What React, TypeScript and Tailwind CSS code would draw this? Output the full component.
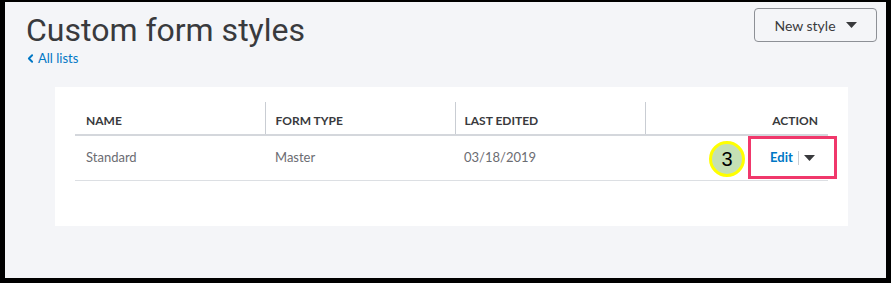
import { ChevronLeft } from 'lucide-react'

function Caret({ className }: { className?: string }) {
  return (
    <svg width="11" height="6" viewBox="0 0 11 6" className={className}>
      <path d="M0 0h11L5.5 6z" fill="currentColor" />
    </svg>
  )
}

const rows = [{ name: 'Standard', type: 'Master', edited: '03/18/2019' }]

export default function App() {
  return (
    <div className="w-[891px] h-[283px] border-l-[5px] border-r-[5px] border-t-[2px] border-b-[5px] border-black bg-[#f4f5f8] font-['Lato',sans-serif] overflow-hidden">
      <div className="flex justify-between pl-[21px] pr-[9px]">
        <div className="pt-[10px]">
          <h1 className="font-['Roboto',sans-serif] text-[32px] leading-[36px] text-[#393a3d]">Custom form styles</h1>
          <a className="mt-[2px] flex items-center text-[13px] leading-[16px] text-[#0077c5]">
            <ChevronLeft size={13} strokeWidth={3.5} className="-ml-[2px] mr-[1px]" />
            All lists
          </a>
        </div>
        <button className="mt-[6px] h-[34px] w-[123px] flex items-center justify-center gap-[10px] rounded-[4px] border border-[#8d9096] bg-[#f4f5f8] text-[14px] text-[#393a3d]">
          New style
          <Caret className="text-[#393a3d]" />
        </button>
      </div>
      <div className="ml-[50px] mt-[21px] w-[793px] h-[139px] bg-white px-[20px] pt-[15px]">
        <table className="w-full border-collapse">
          <thead>
            <tr className="border-b-2 border-[#d4d7dc] text-[12px] font-bold text-[#393a3d] uppercase">
              <th className="w-[190px] h-[33px] pl-[11px] pb-[4px] align-bottom text-left font-bold border-r border-[#c9cdd3]">Name</th>
              <th className="w-[190px] pl-[10px] pb-[4px] align-bottom text-left font-bold border-r border-[#c9cdd3]">Form type</th>
              <th className="w-[190px] pl-[9px] pb-[4px] align-bottom text-left font-bold border-r border-[#c9cdd3]">Last edited</th>
              <th className="pr-[10px] pb-[4px] align-bottom text-right font-bold">Action</th>
            </tr>
          </thead>
          <tbody>
            {rows.map(r => (
              <tr key={r.name} className="border-b border-[#dcdfe3] text-[13px] text-[#6b6c72]">
                <td className="h-[45px] pl-[11px]">{r.name}</td>
                <td className="pl-[10px]">{r.type}</td>
                <td className="pl-[9px]">{r.edited}</td>
                <td className="relative">
                  <div className="absolute left-[64px] top-[5px] w-[36px] h-[36px] rounded-full border-[3px] border-[#ffff00] bg-[#c5e0b4] flex items-center justify-center font-['Liberation_Sans',sans-serif] text-[20px] text-black">
                    3
                  </div>
                  <div className="absolute left-[103px] top-[0px] w-[89px] h-[43px] border-[3px] border-[#f0386b] flex items-center justify-center gap-[5px]">
                    <span className="text-[13px] font-bold text-[#0077c5]">Edit</span>
                    <span className="h-[14px] w-px bg-[#c9cdd3]" />
                    <Caret className="text-[#393a3d]" />
                  </div>
                </td>
              </tr>
            ))}
          </tbody>
        </table>
      </div>
    </div>
  )
}
